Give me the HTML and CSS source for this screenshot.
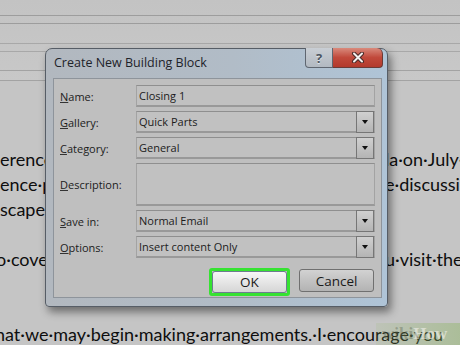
FILE: index.html
```html
<!DOCTYPE html>
<html lang="en">
<head>
    <meta charset="UTF-8">
    <meta name="viewport" content="width=device-width, initial-scale=1.0">
    <title>Create New Building Block</title>
    <link rel="stylesheet" href="styles.css">
</head>
<body>
    <div class="screen">
        <!-- word ruler / header lines -->
        <div class="ruler">
            <div class="rule r1"></div>
            <div class="rule r2"></div>
            <div class="rule r3"></div>
            <div class="rule r4"></div>
            <div class="rule r5"></div>
            <div class="rule r6"></div>
        </div>

        <!-- document text behind the dialog -->
        <div class="doc">
            <p class="line"><span class="left">erence</span><span class="right">la·on·July·2</span></p>
            <p class="line"><span class="left">ence·p</span><span class="right">e·discussion</span></p>
            <p class="line"><span class="left">scape</span></p>
            <p class="line"></p>
            <p class="line"><span class="left cut">o·cove</span><span class="right">u·visit·the</span></p>
            <p class="line"></p>
            <p class="line"></p>
            <p class="line full">hat·we·may·begin·making·arrangements.·I·encourage·you</p>
        </div>

        <div class="dialog">
            <div class="titlebar">
                <span class="title">Create New Building Block</span>
                <div class="controls">
                    <div class="ctl help">?</div>
                    <div class="ctl close">
                        <svg width="14" height="11" viewBox="0 0 14 11">
                            <path d="M3 1.5 L11 9.5 M11 1.5 L3 9.5" stroke="#4a2a28" stroke-width="4" stroke-linecap="round"/>
                            <path d="M3 1.5 L11 9.5 M11 1.5 L3 9.5" stroke="#f4f0ee" stroke-width="2" stroke-linecap="round"/>
                        </svg>
                    </div>
                </div>
            </div>

            <div class="panel">
                <div class="form">
                    <label><u>N</u>ame:</label>
                    <div class="field">Closing 1</div>

                    <label><u>G</u>allery:</label>
                    <div class="field">Quick Parts<span class="drop"></span></div>

                    <label><u>C</u>ategory:</label>
                    <div class="field">General<span class="drop"></span></div>

                    <label><u>D</u>escription:</label>
                    <div class="field tall"></div>

                    <label><u>S</u>ave in:</label>
                    <div class="field">Normal Email<span class="drop"></span></div>

                    <label><u>O</u>ptions:</label>
                    <div class="field">Insert content Only<span class="drop"></span></div>
                </div>

                <div class="buttons">
                    <div class="ok-ring">
                        <button class="btn ok">OK</button>
                    </div>
                    <button class="btn cancel">Cancel</button>
                </div>
            </div>
        </div>

        <div class="watermark"><span class="wiki">wiki</span>How</div>
    </div>
</body>
</html>
```

FILE: styles.css
```css
* {
    margin: 0;
    padding: 0;
    box-sizing: border-box;
}

body {
    width: 460px;
    height: 345px;
    overflow: hidden;
    background: #c5c5c5;
    font-family: 'Open Sans', 'Noto Sans', sans-serif;
    color: #1c1c1c;
}

.screen {
    position: relative;
    width: 460px;
    height: 345px;
    overflow: hidden;
}

/* ruler lines at the top */
.ruler {
    height: 81px;
    display: flex;
    flex-direction: column;
    background: linear-gradient(#c3c3c3, #c8c8c8);
}

.rule {
    height: 1px;
    flex-shrink: 0;
    background: #9d9d9d;
}

.r1 { margin-top: 15px; }
.r2 { margin-top: 7px; }
.r3 { margin-top: 19px; background: #a8a8a8; }
.r4 { margin-top: 7px; background: #a8a8a8; }
.r5 { margin-top: 18px; background: #a3a3a3; }
.r6 { margin-top: 9px; background: #a3a3a3; }

/* document text */
.doc {
    padding-top: 66px;
}

.line {
    display: grid;
    grid-template-columns: 385px 1fr;
    height: 25px;
    line-height: 25px;
    font-family: 'Lato', 'Open Sans', sans-serif;
    font-size: 18px;
    color: #0e0e0e;
    white-space: nowrap;
    overflow: hidden;
}

.line .cut {
    margin-left: -4px;
}

.line .right {
    overflow: hidden;
}

.line.full {
    display: block;
    margin-left: -5px;
}

/* dialog */
.dialog {
    position: absolute;
    left: 45px;
    top: 48px;
    width: 343px;
    height: 259px;
    border: 1px solid #565d66;
    border-radius: 7px 7px 4px 4px;
    background: linear-gradient(to right, #b2b8bf 0%, #b1bcc7 55%, #afc4d7 100%);
    box-shadow: 3px 5px 9px rgba(0, 0, 0, 0.45);
    display: flex;
    flex-direction: column;
}

.titlebar {
    height: 29px;
    display: flex;
    align-items: flex-start;
}

.title {
    padding: 5px 0 0 8px;
    line-height: 18px;
    font-size: 12.5px;
    color: #1e232a;
}

.controls {
    margin-left: auto;
    margin-right: 4px;
    margin-top: -1px;
    display: flex;
}

.ctl {
    height: 20px;
    display: flex;
    align-items: center;
    justify-content: center;
    border: 1px solid #5f6670;
    border-top: none;
}

.help {
    width: 28px;
    border-radius: 0 0 0 4px;
    background: linear-gradient(#c9ced4, #b2b9c1);
    font-weight: bold;
    font-size: 13px;
    color: #4c5561;
    text-shadow: 0 1px 0 #e2e6ea;
}

.close {
    width: 50px;
    border-left: none;
    border-color: #6b3a36;
    border-radius: 0 6px 4px 0;
    background: linear-gradient(#d98a7c, #c1493b 50%, #b33a2d);
}

.panel {
    flex: 1;
    margin: 0 5px 8px 7px;
    padding: 6px 6px 0 6px;
    background: #bfbfbf;
    border: 1px solid #8e949b;
}

.form {
    display: grid;
    grid-template-columns: 76px 1fr;
    row-gap: 4px;
    align-items: center;
}

.form label {
    font-size: 11px;
    color: #1c1c1c;
}

.form u {
    text-decoration-color: #333;
}

.field {
    height: 22px;
    display: flex;
    align-items: center;
    padding-left: 2px;
    font-size: 11px;
    background: #c1c1c1;
    border: 1px solid #a3a3a3;
    border-top-color: #8f8f8f;
    border-bottom: 2px solid #999;
}

.field.tall {
    height: 43px;
}

.drop {
    margin-left: auto;
    width: 18px;
    height: 22px;
    margin-top: -1px;
    margin-bottom: -2px;
    border: 1px solid #767676;
    background: linear-gradient(#d0d0d0, #b4b4b4);
    position: relative;
}

.drop::after {
    content: '';
    position: absolute;
    left: 5px;
    top: 8px;
    border-left: 3.5px solid transparent;
    border-right: 3.5px solid transparent;
    border-top: 4px solid #111;
}

.buttons {
    display: flex;
    justify-content: flex-end;
    align-items: flex-start;
    gap: 9px;
    margin-top: 10px;
    padding-right: 1px;
}

.ok-ring {
    width: 81px;
    height: 28px;
    border: 3px solid #36e232;
    border-radius: 3px;
    display: flex;
}

.btn {
    font-family: 'Open Sans', 'Noto Sans', sans-serif;
    font-size: 13.5px;
    color: #1a1a1a;
    border: 1px solid #707070;
    border-radius: 3px;
}

.ok {
    flex: 1;
    background: linear-gradient(#f7f7f7, #e6e6e6 50%, #d6d6d6);
    border-color: #6c7d8f;
}

.cancel {
    width: 75px;
    height: 23px;
    margin-top: 1px;
    background: linear-gradient(#d2d2d2, #c2c2c2 50%, #b3b3b3);
}

/* watermark */
.watermark {
    position: absolute;
    right: 0;
    bottom: 0;
    width: 84px;
    height: 22px;
    padding-left: 6px;
    background: linear-gradient(to right, rgba(150, 185, 110, 0.15), rgba(140, 180, 100, 0.45));
    font-family: 'Liberation Serif', serif;
    font-weight: bold;
    font-size: 17px;
    line-height: 22px;
    color: rgba(235, 235, 228, 0.7);
    white-space: nowrap;
}

.watermark .wiki {
    color: rgba(80, 90, 70, 0.35);
}
```
